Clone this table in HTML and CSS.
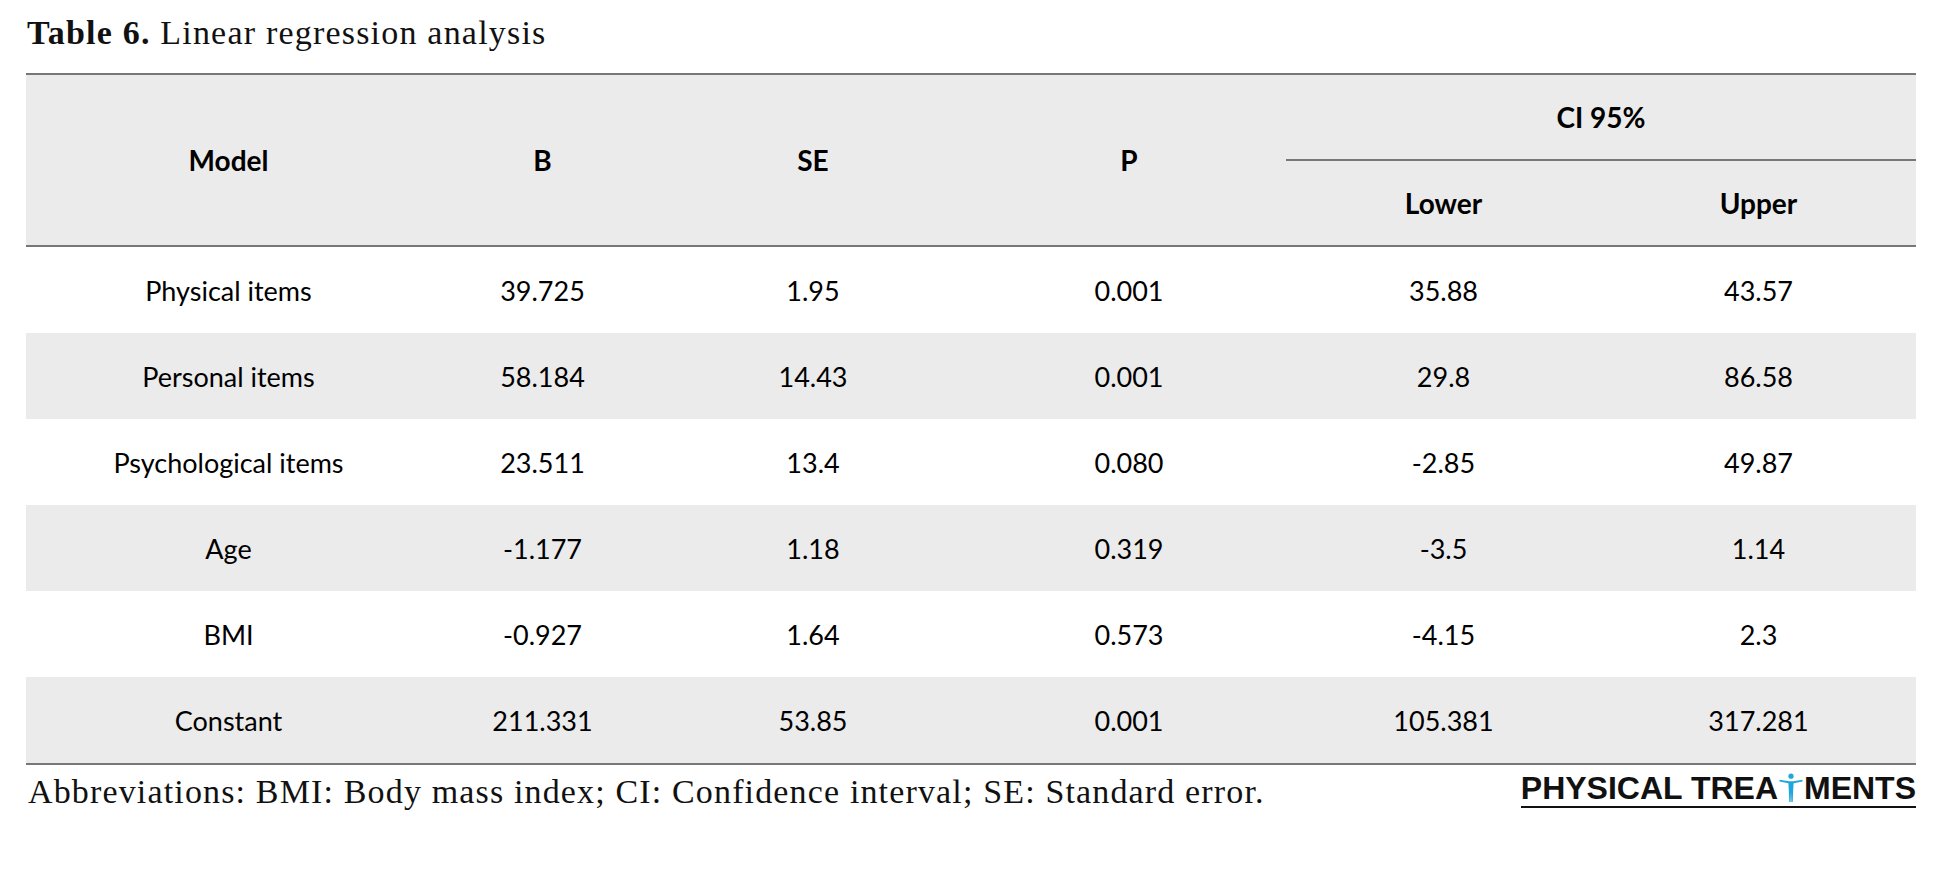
FILE: index.html
```html
<!DOCTYPE html>
<html lang="en">
<head>
<meta charset="utf-8">
<title>Table 6. Linear regression analysis</title>
<link rel="stylesheet" href="styles.css">
</head>
<body>
<div class="page">
  <h1 class="caption"><b>Table 6.</b> Linear regression analysis</h1>
  <table class="reg">
    <colgroup>
      <col class="c-model"><col class="c-b"><col class="c-se"><col class="c-p"><col class="c-ci"><col class="c-ci">
    </colgroup>
    <thead>
      <tr class="h1">
        <th rowspan="2">Model</th>
        <th rowspan="2">B</th>
        <th rowspan="2">SE</th>
        <th rowspan="2">P</th>
        <th colspan="2" class="ci">CI 95%</th>
      </tr>
      <tr class="h2">
        <th>Lower</th>
        <th>Upper</th>
      </tr>
    </thead>
    <tbody>
      <tr><td>Physical items</td><td>39.725</td><td>1.95</td><td>0.001</td><td>35.88</td><td>43.57</td></tr>
      <tr class="alt"><td>Personal items</td><td>58.184</td><td>14.43</td><td>0.001</td><td>29.8</td><td>86.58</td></tr>
      <tr><td>Psychological items</td><td>23.511</td><td>13.4</td><td>0.080</td><td>-2.85</td><td>49.87</td></tr>
      <tr class="alt"><td>Age</td><td>-1.177</td><td>1.18</td><td>0.319</td><td>-3.5</td><td>1.14</td></tr>
      <tr><td>BMI</td><td>-0.927</td><td>1.64</td><td>0.573</td><td>-4.15</td><td>2.3</td></tr>
      <tr class="alt"><td>Constant</td><td>211.331</td><td>53.85</td><td>0.001</td><td>105.381</td><td>317.281</td></tr>
    </tbody>
  </table>
  <div class="foot">
    <p class="abbr">Abbreviations: BMI: Body mass index; CI: Confidence interval; SE: Standard error.</p>
    <div class="logo">
      <span class="logo-text">PHYSICAL TREA</span><svg class="figure" viewBox="0 0 24 30" width="24" height="30" aria-hidden="true">
        <circle cx="12" cy="3.2" r="2.6" fill="#1fa6dc"/>
        <path d="M0.5 6.8 L10 8.2 L14 8.2 L23.5 6.8 L23.5 8.4 L14.6 10.2 L14.2 17 L13.7 29 L12.4 29 L12 19 L11.6 29 L10.3 29 L9.8 17 L9.4 10.2 L0.5 8.4 Z" fill="#1fa6dc"/>
      </svg><span class="logo-text">MENTS</span>
    </div>
  </div>
</div>
</body>
</html>
```
FILE: styles.css
```css
html, body {
  margin: 0;
  padding: 0;
  background: #ffffff;
}

.page {
  padding: 0 44px 0 26px;
  width: 1890px;
}

.caption {
  margin: 13px 0 20px 1px;
  font-family: "Liberation Serif", "Times New Roman", serif;
  font-size: 34px;
  letter-spacing: 1.2px;
  line-height: 40px;
  font-weight: normal;
  color: #111;
}

.caption b {
  font-weight: bold;
}

.reg {
  width: 1890px;
  table-layout: fixed;
  border-collapse: collapse;
  border-top: 2px solid #777;
  border-bottom: 2px solid #777;
  font-family: Lato, "Liberation Sans", sans-serif;
  font-size: 27px;
  color: #000;
}

.c-model { width: 405px; }
.c-b { width: 223px; }
.c-se { width: 318px; }
.c-p { width: 314px; }
.c-ci { width: 315px; }

.reg thead tr {
  background: #ebebeb;
}

.reg th {
  font-weight: bold;
  font-size: 28px;
  text-align: center;
  vertical-align: middle;
  padding: 0;
}

.reg .h1 th {
  height: 84px;
}

.reg .h2 th {
  height: 84px;
}

.reg .ci {
  border-bottom: 2px solid #777;
}

.reg thead {
  border-bottom: 2px solid #777;
}

.reg td {
  height: 86px;
  padding: 0;
  text-align: center;
  vertical-align: middle;
}

.reg .alt {
  background: #ebebeb;
}

.foot {
  display: flex;
  justify-content: space-between;
  align-items: flex-start;
}

.abbr {
  margin: 7px 0 0 2px;
  font-family: "Liberation Serif", "Times New Roman", serif;
  font-size: 34px;
  letter-spacing: 1.15px;
  line-height: 40px;
  color: #111;
}

.logo {
  margin-top: 8px;
  display: flex;
  align-items: flex-end;
  border-bottom: 2px solid #111;
  padding-bottom: 3px;
}

.logo-text {
  font-family: "Liberation Sans", Arial, sans-serif;
  font-weight: bold;
  font-size: 32px;
  line-height: 30px;
  color: #111;
  white-space: pre;
}

.figure {
  display: block;
  margin: 0 1px 0 1px;
}
```
